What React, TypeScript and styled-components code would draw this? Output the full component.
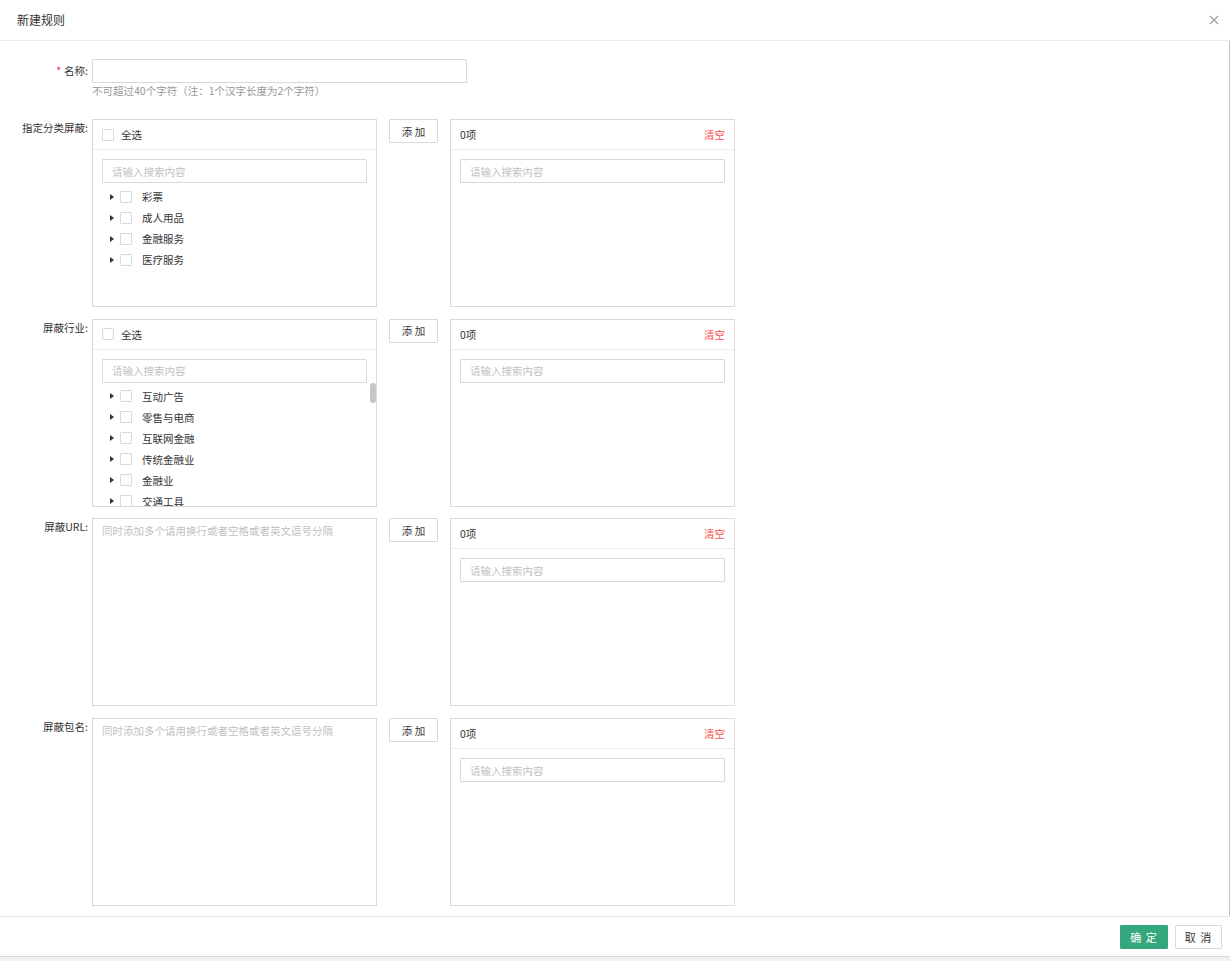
import React from "react";
import styled, { createGlobalStyle } from "styled-components";

const GlobalStyle = createGlobalStyle`
  html, body {
    margin: 0;
    padding: 0;
    width: 1230px;
    height: 961px;
    overflow: hidden;
    background: #f0f0f0;
  }
  body {
    font-family: "Noto Sans CJK SC", "Microsoft YaHei", "Noto Sans", sans-serif;
    font-size: 10.5px;
    color: #333;
  }
  * { box-sizing: border-box; }
`;

const Page = styled.div`
  width: 1230px;
  height: 961px;
  background: #f0f0f0;
`;

const Modal = styled.div`
  height: 957px;
  background: #fff;
  border-bottom: 1px solid #d9d9d9;
  display: flex;
  flex-direction: column;
`;

const Header = styled.div`
  height: 41px;
  flex: none;
  border-bottom: 1px solid #ebebeb;
  display: flex;
  align-items: center;
  justify-content: space-between;
  padding: 0 11px 0 17px;
`;

const Title = styled.div`
  font-size: 12px;
  color: #333;
  line-height: 16px;
`;

const CloseButton = styled.button`
  border: 0;
  background: transparent;
  padding: 0;
  width: 11px;
  height: 11px;
  display: flex;
  align-items: center;
  justify-content: center;
  cursor: pointer;
`;

const Body = styled.div`
  flex: 1;
  padding-top: 18px;
  border-right: 1px solid #c2c2c2;
  overflow: hidden;
`;

const FormItem = styled.div<{ $gap: number }>`
  display: flex;
  align-items: flex-start;
  margin-bottom: ${(p) => p.$gap}px;
`;

const Label = styled.div<{ $lh: number }>`
  width: 88px;
  flex: none;
  text-align: right;
  line-height: ${(p) => p.$lh}px;
  color: #333;
  white-space: nowrap;
`;

const Required = styled.span`
  color: #f5222d;
  margin-right: 3px;
`;

const Control = styled.div`
  margin-left: 4px;
  display: flex;
  align-items: flex-start;
  gap: 12px;
`;

const NameBlock = styled.div`
  display: flex;
  flex-direction: column;
  margin-left: 4px;
`;

const TextInput = styled.input`
  width: 375px;
  height: 24px;
  border: 1px solid #d9d9d9;
  border-radius: 1px;
  outline: none;
  padding: 0 8px;
  font: inherit;
  color: #333;
`;

const Hint = styled.div`
  color: #999;
  line-height: 16px;
`;

const Panel = styled.div`
  width: 285px;
  height: 188px;
  border: 1px solid #d9d9d9;
  display: flex;
  flex-direction: column;
  background: #fff;
`;

const PanelHeader = styled.div`
  height: 30px;
  flex: none;
  border-bottom: 1px solid #ececec;
  display: flex;
  align-items: center;
  justify-content: space-between;
  padding: 0 9px;
`;

const HeaderLeft = styled.div`
  display: flex;
  align-items: center;
`;

const Checkbox = styled.span<{ $mr: number }>`
  width: 12px;
  height: 12px;
  flex: none;
  border: 1px solid #d9d9d9;
  border-radius: 1px;
  background: #fff;
  margin-right: ${(p) => p.$mr}px;
`;

const ClearLink = styled.span`
  color: #ff4d4f;
  cursor: pointer;
`;

const Search = styled.input`
  flex: none;
  height: 24px;
  margin: 9px 9px 0;
  border: 1px solid #d9d9d9;
  border-radius: 1px;
  outline: none;
  padding: 0 9px;
  font: inherit;
  color: #333;
  &::placeholder { color: #bfbfbf; }
`;

const TreeArea = styled.div`
  flex: 1;
  min-height: 0;
  position: relative;
`;

const TreeList = styled.div`
  height: 100%;
  overflow-y: auto;
  padding-top: 3px;
  scrollbar-width: none;
  &::-webkit-scrollbar { display: none; }
`;

const ScrollThumb = styled.span`
  position: absolute;
  top: 0;
  right: 0;
  width: 6px;
  height: 20px;
  border-radius: 3px;
  background: #c6c6c6;
`;

const TreeItem = styled.div`
  height: 21px;
  display: flex;
  align-items: center;
  padding-left: 17px;
  color: #333;
  white-space: nowrap;
`;

const Caret = styled.span`
  width: 0;
  height: 0;
  border-left: 4px solid #333;
  border-top: 3px solid transparent;
  border-bottom: 3px solid transparent;
  margin-right: 6px;
`;

const TextArea = styled.textarea`
  width: 285px;
  height: 188px;
  border: 1px solid #d9d9d9;
  border-radius: 0;
  outline: none;
  resize: none;
  padding: 4px 9px;
  font: inherit;
  line-height: 16px;
  color: #333;
  &::placeholder { color: #bfbfbf; }
`;

const Button = styled.button<{ $primary?: boolean; $w: number; $fs: number; $ls: number }>`
  width: ${(p) => p.$w}px;
  height: 24px;
  flex: none;
  border: 1px solid ${(p) => (p.$primary ? "#34a77c" : "#d9d9d9")};
  background: ${(p) => (p.$primary ? "#34a77c" : "#fff")};
  color: ${(p) => (p.$primary ? "#fff" : "#333")};
  border-radius: 1px;
  font-family: inherit;
  font-size: ${(p) => p.$fs}px;
  letter-spacing: ${(p) => p.$ls}px;
  padding: 0;
  cursor: pointer;
`;

const Footer = styled.div`
  height: 40px;
  flex: none;
  border-top: 1px solid #e6e6e6;
  display: flex;
  align-items: center;
  justify-content: flex-end;
  gap: 7px;
  padding-right: 8px;
`;

const categories = ["彩票", "成人用品", "金融服务", "医疗服务"];

const industries = [
  "互动广告", "零售与电商", "互联网金融", "传统金融业", "金融业", "交通工具",
  "游戏", "教育培训", "房地产", "旅游出行", "医疗健康", "食品饮料", "美妆个护",
  "服饰鞋包", "家居建材", "通讯", "汽车", "文化娱乐", "生活服务", "体育运动",
  "母婴", "工具类", "社交", "新闻资讯", "阅读", "视频", "音乐", "摄影",
  "商务服务", "电子产品", "农林牧渔", "能源化工", "物流", "招商加盟", "其他",
];

const PLACEHOLDER = "请输入搜索内容";
const MULTI = "同时添加多个请用换行或者空格或者英文逗号分隔";

const TreePanel: React.FC<{ items: string[]; scroll?: boolean }> = ({ items, scroll }) => (
  <Panel>
    <PanelHeader>
      <HeaderLeft>
        <Checkbox $mr={7} />
        <span>全选</span>
      </HeaderLeft>
    </PanelHeader>
    <Search placeholder={PLACEHOLDER} />
    <TreeArea>
      <TreeList>
        {items.map((it) => (
          <TreeItem key={it}>
            <Caret />
            <Checkbox $mr={10} />
            <span>{it}</span>
          </TreeItem>
        ))}
      </TreeList>
      {scroll && <ScrollThumb />}
    </TreeArea>
  </Panel>
);

const SelectedPanel: React.FC = () => (
  <Panel>
    <PanelHeader>
      <span>0项</span>
      <ClearLink>清空</ClearLink>
    </PanelHeader>
    <Search placeholder={PLACEHOLDER} />
  </Panel>
);

const Row: React.FC<{ label: string; children: React.ReactNode }> = ({ label, children }) => (
  <FormItem $gap={11.7}>
    <Label $lh={18}>{label}</Label>
    <Control>
      {children}
      <Button $w={49} $fs={10.5} $ls={0}>添 加</Button>
      <SelectedPanel />
    </Control>
  </FormItem>
);

export default function App() {
  return (
    <Page>
      <GlobalStyle />
      <Modal>
        <Header>
          <Title>新建规则</Title>
          <CloseButton aria-label="close">
            <svg width="10" height="10" viewBox="0 0 10 10">
              <path d="M1 1 L9 9 M9 1 L1 9" stroke="#9a9a9a" strokeWidth="1.1" fill="none" />
            </svg>
          </CloseButton>
        </Header>
        <Body>
          <FormItem $gap={20}>
            <Label $lh={24}>
              <Required>*</Required>名称:
            </Label>
            <NameBlock>
              <TextInput />
              <Hint>不可超过40个字符（注：1个汉字长度为2个字符）</Hint>
            </NameBlock>
          </FormItem>
          <Row label="指定分类屏蔽:">
            <TreePanel items={categories} />
          </Row>
          <Row label="屏蔽行业:">
            <TreePanel items={industries} scroll />
          </Row>
          <Row label="屏蔽URL:">
            <TextArea placeholder={MULTI} />
          </Row>
          <Row label="屏蔽包名:">
            <TextArea placeholder={MULTI} />
          </Row>
        </Body>
        <Footer>
          <Button $primary $w={48} $fs={11} $ls={1}>确 定</Button>
          <Button $w={47} $fs={11} $ls={1}>取 消</Button>
        </Footer>
      </Modal>
    </Page>
  );
}
